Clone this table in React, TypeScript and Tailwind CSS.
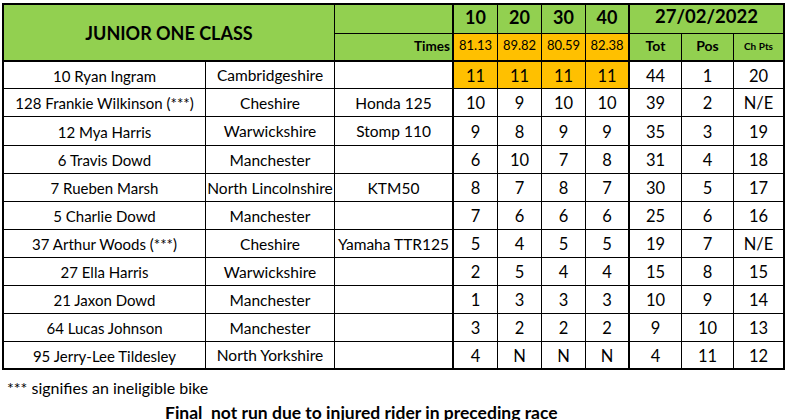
import React from 'react';

type Val = string | number;

const rows: Val[][] = [
  ['10 Ryan Ingram', 'Cambridgeshire', '', 11, 11, 11, 11, 44, 1, 20],
  ['128 Frankie Wilkinson (***)', 'Cheshire', 'Honda 125', 10, 9, 10, 10, 39, 2, 'N/E'],
  ['12 Mya Harris', 'Warwickshire', 'Stomp 110', 9, 8, 9, 9, 35, 3, 19],
  ['6 Travis Dowd', 'Manchester', '', 6, 10, 7, 8, 31, 4, 18],
  ['7 Rueben Marsh', 'North Lincolnshire', 'KTM50', 8, 7, 8, 7, 30, 5, 17],
  ['5 Charlie Dowd', 'Manchester', '', 7, 6, 6, 6, 25, 6, 16],
  ['37 Arthur Woods (***)', 'Cheshire', 'Yamaha TTR125', 5, 4, 5, 5, 19, 7, 'N/E'],
  ['27 Ella Harris', 'Warwickshire', '', 2, 5, 4, 4, 15, 8, 15],
  ['21 Jaxon Dowd', 'Manchester', '', 1, 3, 3, 3, 10, 9, 14],
  ['64 Lucas Johnson', 'Manchester', '', 3, 2, 2, 2, 9, 10, 13],
  ['95 Jerry-Lee Tildesley', 'North Yorkshire', '', 4, 'N', 'N', 'N', 4, 11, 12],
];

// right-hand border for each column
const colBorder = [
  'border-r',
  'border-r',
  'border-r-2',
  'border-r',
  'border-r',
  'border-r',
  'border-r-2',
  'border-r',
  'border-r',
  '',
];

const colSize = [
  'text-[15px]',
  'text-[15.5px]',
  'text-[15.5px]',
  'text-[16.5px]',
  'text-[16.5px]',
  'text-[16.5px]',
  'text-[16.5px]',
  'text-[16.5px]',
  'text-[16.5px]',
  'text-[16.5px]',
];

const Cell = ({ children, className = '' }: { children?: React.ReactNode; className?: string }) => (
  <div className={`flex items-center justify-center border-black whitespace-nowrap overflow-visible ${className}`}>
    {children}
  </div>
);

const App = () => {
  return (
    <div className="w-[787px] h-[420px] bg-white text-black font-[Lato,'Open_Sans',sans-serif] overflow-hidden">
      <div className="pl-[2px] pt-[3px]">
        <div className="grid w-[783px] border-2 border-black grid-cols-[202px_129px_119px_44px_44px_44px_44px_52px_52px_49px] grid-rows-[29px_28px_27px_28px_29px_28px_28px_28px_28px_28px_28px_28px_26px]">
          {/* Header */}
          <Cell className="col-span-2 row-span-2 bg-[#92D050] border-r border-b-2 text-[18px] font-bold pt-[2px]">
            JUNIOR ONE CLASS
          </Cell>
          <Cell className="bg-[#92D050] border-r-2 border-b" />
          {['10', '20', '30', '40'].map((h, i) => (
            <Cell
              key={h}
              className={`bg-[#92D050] border-b ${i === 3 ? 'border-r-2' : 'border-r'} text-[18px] font-bold items-end pb-[2px]`}
            >
              {h}
            </Cell>
          ))}
          <Cell className="col-span-3 bg-[#92D050] border-b text-[18.5px] font-bold items-end pb-[2px]">
            27/02/2022
          </Cell>

          <Cell className="bg-[#92D050] border-r-2 border-b-2 justify-end pr-[2px] text-[13.5px] font-bold items-end pb-[4px]">
            Times
          </Cell>
          {['81.13', '89.82', '80.59', '82.38'].map((t, i) => (
            <Cell
              key={t}
              className={`bg-[#FFC000] border-b-2 ${i === 3 ? 'border-r-2' : 'border-r'} text-[13px] items-end pb-[5px]`}
            >
              {t}
            </Cell>
          ))}
          <Cell className="bg-[#92D050] border-r border-b-2 text-[14px] font-bold items-end pb-[4px]">Tot</Cell>
          <Cell className="bg-[#92D050] border-r border-b-2 text-[14px] font-bold items-end pb-[4px]">Pos</Cell>
          <Cell className="bg-[#92D050] border-b-2 text-[10px] font-bold items-end pb-[6px]">Ch Pts</Cell>

          {/* Riders */}
          {rows.map((r, ri) =>
            r.map((v, ci) => {
              const last = ri === rows.length - 1;
              const orange = ri === 0 && ci >= 3 && ci <= 6;
              return (
                <Cell
                  key={`${ri}-${ci}`}
                  className={`${colBorder[ci]} ${last ? '' : 'border-b'} ${orange ? 'bg-[#FFC000]' : ''} ${colSize[ci]} pt-[2px]`}
                >
                  {v}
                </Cell>
              );
            })
          )}
        </div>
      </div>

      <p className="pl-[7px] pt-[8px] text-[16px] leading-[20px]">*** signifies an ineligible bike</p>
      <p className="pl-[165px] pt-[4px] text-[17.5px] leading-[22px] font-bold whitespace-pre">
        Final  not run due to injured rider in preceding race
      </p>
    </div>
  );
};

export default App;
